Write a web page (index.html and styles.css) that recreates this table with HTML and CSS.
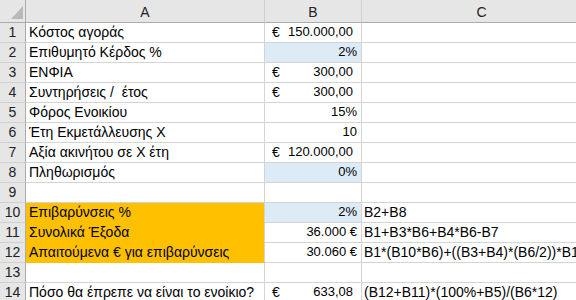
FILE: index.html
```html
<!DOCTYPE html>
<html>
<head>
<meta charset="utf-8">
<link rel="stylesheet" href="styles.css">
</head>
<body>
<div class="sheet">
  <div class="corner"><svg class="tri" width="12" height="13" viewBox="0 0 12 13"><polygon points="0,13 12,0 12,13" fill="#b9b9b9"/></svg></div>
  <div class="colhead">A</div>
  <div class="colhead">B</div>
  <div class="colhead">C</div>

  <div class="rowhead">1</div>
  <div class="cell">Κόστος αγοράς</div>
  <div class="cell acc"><span class="eur">€</span><span class="num">150.000,00</span></div>
  <div class="cell"></div>

  <div class="rowhead">2</div>
  <div class="cell">Επιθυμητό Κέρδος %</div>
  <div class="cell right blue">2%</div>
  <div class="cell"></div>

  <div class="rowhead">3</div>
  <div class="cell">ΕΝΦΙΑ</div>
  <div class="cell acc"><span class="eur">€</span><span class="num">300,00</span></div>
  <div class="cell"></div>

  <div class="rowhead">4</div>
  <div class="cell">Συντηρήσεις /&nbsp; έτος</div>
  <div class="cell acc"><span class="eur">€</span><span class="num">300,00</span></div>
  <div class="cell"></div>

  <div class="rowhead">5</div>
  <div class="cell">Φόρος Ενοικίου</div>
  <div class="cell right">15%</div>
  <div class="cell"></div>

  <div class="rowhead">6</div>
  <div class="cell">Έτη Εκμετάλλευσης Χ</div>
  <div class="cell right">10</div>
  <div class="cell"></div>

  <div class="rowhead">7</div>
  <div class="cell">Αξία ακινήτου σε Χ έτη</div>
  <div class="cell acc"><span class="eur">€</span><span class="num">120.000,00</span></div>
  <div class="cell"></div>

  <div class="rowhead">8</div>
  <div class="cell">Πληθωρισμός</div>
  <div class="cell right blue">0%</div>
  <div class="cell"></div>

  <div class="rowhead">9</div>
  <div class="cell"></div>
  <div class="cell"></div>
  <div class="cell"></div>

  <div class="rowhead">10</div>
  <div class="cell orange">Επιβαρύνσεις %</div>
  <div class="cell right blue">2%</div>
  <div class="cell formula">B2+B8</div>

  <div class="rowhead">11</div>
  <div class="cell orange">Συνολικά Έξοδα</div>
  <div class="cell right">36.000 €</div>
  <div class="cell formula">B1+B3*B6+B4*B6-B7</div>

  <div class="rowhead">12</div>
  <div class="cell orange">Απαιτούμενα € για επιβαρύνσεις</div>
  <div class="cell right">30.060 €</div>
  <div class="cell formula">B1*(B10*B6)+((B3+B4)*(B6/2))*B10</div>

  <div class="rowhead">13</div>
  <div class="cell"></div>
  <div class="cell"></div>
  <div class="cell"></div>

  <div class="rowhead">14</div>
  <div class="cell">Πόσο θα έπρεπε να είναι το ενοίκιο?</div>
  <div class="cell acc"><span class="eur">€</span><span class="num">633,08</span></div>
  <div class="cell formula">(B12+B11)*(100%+B5)/(B6*12)</div>
</div>
</body>
</html>
```

FILE: styles.css
```css
html, body {
  margin: 0;
  padding: 0;
  background: #ffffff;
  overflow: hidden;
}

.sheet {
  display: grid;
  grid-template-columns: 26px 239px 97px 240px;
  grid-template-rows: 23px repeat(14, 20px);
  width: 602px;
  font-family: "Liberation Sans", Arial, sans-serif;
  font-size: 14px;
  color: #000000;
}

.corner {
  background: #e6e6e6;
  border-right: 1px solid #ababab;
  border-bottom: 1px solid #ababab;
  display: flex;
  align-items: flex-end;
  justify-content: flex-end;
  padding: 0 2px 3px 0;
}

.colhead {
  background: #e6e6e6;
  border-right: 1px solid #d0d0d0;
  border-bottom: 1px solid #ababab;
  display: flex;
  align-items: center;
  justify-content: center;
  color: #222222;
  padding-top: 1px;
}

.rowhead {
  background: #e6e6e6;
  border-right: 1px solid #ababab;
  border-bottom: 1px solid #d0d0d0;
  display: flex;
  align-items: flex-end;
  justify-content: center;
  color: #222222;
  padding-bottom: 2px;
  line-height: 16px;
}

.cell {
  border-right: 1px solid #d4d4d4;
  border-bottom: 1px solid #d4d4d4;
  display: flex;
  align-items: flex-end;
  padding: 0 3px 2px 3px;
  line-height: 16px;
  white-space: nowrap;
  overflow: visible;
  min-width: 0;
}

.right {
  justify-content: flex-end;
  padding-right: 4px;
  font-size: 13px;
}

.acc {
  justify-content: space-between;
  padding-left: 7px;
  padding-right: 8px;
  font-size: 13px;
}

.eur {
  font-size: 14px;
}

.blue {
  background: #ddebf7;
}

.orange {
  background: #ffc000;
  border-bottom-color: #ffc000;
  border-right-color: #d4d4d4;
}

.formula {
  padding-left: 2px;
  overflow: hidden;
}
```
